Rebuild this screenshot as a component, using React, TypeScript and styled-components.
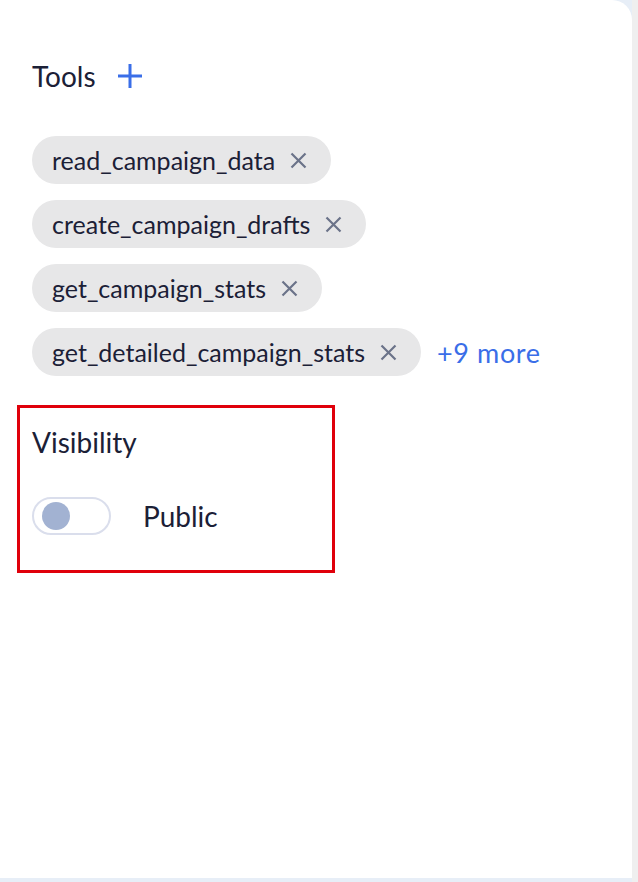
import React from 'react';
import styled, {createGlobalStyle} from 'styled-components';

const GlobalStyle = createGlobalStyle`
  html, body {
    margin: 0;
    padding: 0;
    background: #efefef;
  }
  body {
    font-family: Lato, "Noto Sans", sans-serif;
    color: #1b2036;
  }
`;

const Page = styled.div`
  display: flex;
  width: 638px;
  height: 882px;
  overflow: hidden;
`;

const Column = styled.div`
  width: 632px;
  display: flex;
  flex-direction: column;
  background: #e7eef7;
`;

const Card = styled.div`
  height: 878px;
  background: white;
  border-top-right-radius: 20px;
  padding: 58px 32px 0 32px;
  box-sizing: border-box;
`;

const Header = styled.div`
  display: flex;
  align-items: center;
  gap: 21px;
  height: 36px;
`;

const Title = styled.h2`
  margin: 0;
  font-size: 28px;
  font-weight: 400;
  line-height: 36px;
`;

const AddButton = styled.button`
  border: none;
  background: none;
  padding: 0;
  display: flex;
  color: #3a6ee8;
`;

const Tags = styled.div`
  display: flex;
  flex-wrap: wrap;
  align-items: center;
  gap: 16px 16px;
  margin-top: 42px;
  width: 568px;
`;

const Chip = styled.span`
  display: inline-flex;
  align-items: center;
  gap: 15px;
  height: 48px;
  padding: 0 24px 0 20px;
  border-radius: 24px;
  background: #e7e7e8;
  font-size: 25px;
`;

const Remove = styled.span`
  display: flex;
  color: #6b7389;
`;

const More = styled.a`
  font-size: 27px;
  letter-spacing: 0.6px;
  color: #3a6ee8;
  text-decoration: none;
`;

const Marked = styled.section`
  width: 318px;
  box-sizing: border-box;
  margin: 29px 0 0 -15px;
  border: 3px solid #e0000b;
  padding: 16px 12px 35px 12px;
`;

const SubTitle = styled.h3`
  margin: 0;
  font-size: 28px;
  font-weight: 400;
  line-height: 36px;
`;

const ToggleRow = styled.label`
  display: flex;
  align-items: center;
  gap: 32px;
  margin-top: 37px;
  font-size: 28px;
`;

const Track = styled.span<{on?: boolean}>`
  display: flex;
  align-items: center;
  width: 79px;
  height: 38px;
  box-sizing: border-box;
  border: 2px solid #dadeec;
  border-radius: 19px;
  padding: 0 8px;
  justify-content: ${p => (p.on ? 'flex-end' : 'flex-start')};
  background: white;
`;

const Knob = styled.span`
  width: 28px;
  height: 28px;
  border-radius: 50%;
  background: #a2b2d2;
`;

const Scroll = styled.div`
  width: 6px;
  background: #efefef;
`;

const Plus = () => (
  <svg width="26" height="26" viewBox="0 0 26 26" fill="none" stroke="currentColor" strokeWidth="3">
    <path d="M13 1v24M1 13h24"/>
  </svg>
);

const Cross = () => (
  <svg width="17" height="17" viewBox="0 0 17 17" fill="none" stroke="currentColor" strokeWidth="2.2">
    <path d="M1.5 1.5l14 14M15.5 1.5l-14 14"/>
  </svg>
);

const tools = [
  'read_campaign_data',
  'create_campaign_drafts',
  'get_campaign_stats',
  'get_detailed_campaign_stats',
];

export default function App() {
  return (
    <Page>
      <GlobalStyle/>
      <Column>
        <Card>
          <Header>
            <Title>Tools</Title>
            <AddButton><Plus/></AddButton>
          </Header>
          <Tags>
            {tools.map(tool =>
              <Chip key={tool}>
                {tool}
                <Remove><Cross/></Remove>
              </Chip>
            )}
            <More href="#">+9 more</More>
          </Tags>
          <Marked>
            <SubTitle>Visibility</SubTitle>
            <ToggleRow>
              <Track><Knob/></Track>
              Public
            </ToggleRow>
          </Marked>
        </Card>
      </Column>
      <Scroll/>
    </Page>
  );
}
